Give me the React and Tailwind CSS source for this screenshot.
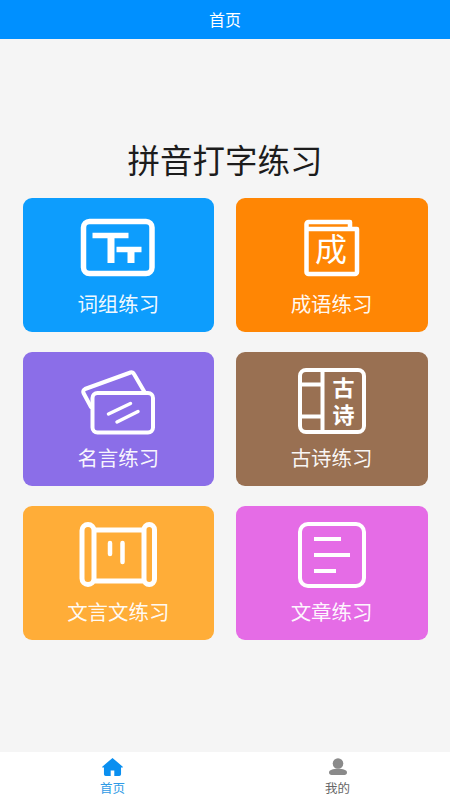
const FONT = '"Noto Sans CJK SC", "Noto Sans", sans-serif';

function Icon({ viewBox, children }) {
  return (
    <svg viewBox={viewBox} className="block h-[70px] w-[90px]" fill="none" stroke="#fff" strokeLinecap="round" strokeLinejoin="round">
      {children}
    </svg>
  );
}

const cards = [
  {
    label: "词组练习",
    bg: "bg-[#0d9dfd]",
    icon: (
      <Icon viewBox="73.5 214 90 70">
        <rect x="84" y="221.5" width="68.5" height="52" rx="6" strokeWidth="5.5" />
        <path d="M93 235.5H129M117 249.5H142" strokeWidth="5.5" strokeLinecap="butt" />
        <path d="M111.5 235.5V263M131.5 249.5V263" strokeWidth="7" strokeLinecap="butt" />
      </Icon>
    ),
  },
  {
    label: "成语练习",
    bg: "bg-[#ff8604]",
    icon: (
      <Icon viewBox="287 214 90 70">
        <path d="M306.5 229V224a2 2 0 0 1 2-2H350V229M306.5 229H357V272a2 2 0 0 1-2 2H308.500a2 2 0 0 1-2-2Z" strokeWidth="4.5" />
        <text x="331" y="261" textAnchor="middle" fontSize="32" fill="#fff" stroke="none" style={{ fontFamily: FONT }}>成</text>
      </Icon>
    ),
  },
  {
    label: "名言练习",
    bg: "bg-[#8b6ee8]",
    icon: (
      <Icon viewBox="73.5 368 90 70">
        <path d="M91.5 407L84 393a3 3 0 0 1 1.5-4L131 372.500a3 3 0 0 1 3.500 1.500L145 392" strokeWidth="4" />
        <rect x="93" y="393" width="60.5" height="39.500" rx="5" strokeWidth="4" />
        <path d="M109 414L131 403.5M117.5 422L138.5 411.5" strokeWidth="3.5" />
      </Icon>
    ),
  },
  {
    label: "古诗练习",
    bg: "bg-[#997052]",
    icon: (
      <Icon viewBox="287 368 90 70">
        <rect x="300" y="370" width="64" height="62" rx="6" strokeWidth="4" />
        <path d="M322.5 370V432M300 384.5H322.5M300 416.5H322.5" strokeWidth="4" strokeLinecap="butt" />
        <text textAnchor="middle" fontSize="22" fontWeight="700" fill="#fff" stroke="none" style={{ fontFamily: FONT }}>
          <tspan x="343.5" y="396">古</tspan>
          <tspan x="343.5" y="423">诗</tspan>
        </text>
      </Icon>
    ),
  },
  {
    label: "文言文练习",
    bg: "bg-[#ffad38]",
    icon: (
      <Icon viewBox="73.5 522 90 70">
        <rect x="82.5" y="524.500" width="12" height="60" rx="6" strokeWidth="5" />
        <rect x="144.5" y="524.500" width="10.5" height="60" rx="5.25" strokeWidth="5" />
        <path d="M95 530H144M95 581H144" strokeWidth="5" strokeLinecap="butt" />
        <path d="M110.5 543V554M123 543V562" strokeWidth="4.5" />
      </Icon>
    ),
  },
  {
    label: "文章练习",
    bg: "bg-[#e56ce6]",
    icon: (
      <Icon viewBox="287 522 90 70">
        <rect x="300" y="524" width="64" height="62" rx="8" strokeWidth="4" />
        <path d="M314 539H341M314 555H350M314 571H336" strokeWidth="4" strokeLinecap="butt" />
      </Icon>
    ),
  },
];

export default function App() {
  return (
    <div className="flex h-[800px] w-[450px] flex-col bg-[#f5f5f5]" style={{ fontFamily: FONT }}>
      <header className="flex h-[39px] items-center justify-center bg-[#0090ff] pb-[1px] text-[16px] text-white">首页</header>
      <main className="flex-1 pt-[98px]">
        <h1 className="mb-[17px] text-center text-[32.5px] leading-[44px] font-normal text-[#1c1c1c]">拼音打字练习</h1>
        <div className="grid grid-cols-2 gap-x-[21.5px] gap-y-[20px] px-[22.5px]">
          {cards.map((c) => (
            <div key={c.label} className={`flex h-[134px] flex-col items-center rounded-[9px] pt-[16px] text-white ${c.bg}`}>
              {c.icon}
              <div className="mt-[5px] text-[20.5px] leading-[28px] text-white/95">{c.label}</div>
            </div>
          ))}
        </div>
      </main>
      <nav className="grid h-[48px] grid-cols-2 bg-white">
        <div className="flex flex-col items-center">
          <svg viewBox="0 0 24 20" className="mt-[6px] h-[18px] w-[23px]" fill="#0a8ff0">
            <path d="M12 0L0.6 9.600a.6.6 0 0 0 .4 1H2.500V18a2 2 0 0 0 2 2H10V14H14V20H19.500a2 2 0 0 0 2-2V10.600H23a.6.6 0 0 0 .4-1Z" />
          </svg>
          <span className="mt-[3px] text-[12.5px] leading-[18px] text-[#2f9be6]">首页</span>
        </div>
        <div className="flex flex-col items-center">
          <svg viewBox="0 0 18 18" className="mt-[6px] h-[18px] w-[18px]" fill="#8a8a8a">
            <circle cx="9" cy="5.500" r="5.300" />
            <path d="M0 14.500C0 12 4 10.800 9 10.800S18 12 18 14.500C18 16 17 17 15.500 17H2.500C1 17 0 16 0 14.500Z" />
          </svg>
          <span className="mt-[3px] text-[12.5px] leading-[18px] text-[#666]">我的</span>
        </div>
      </nav>
    </div>
  );
}
